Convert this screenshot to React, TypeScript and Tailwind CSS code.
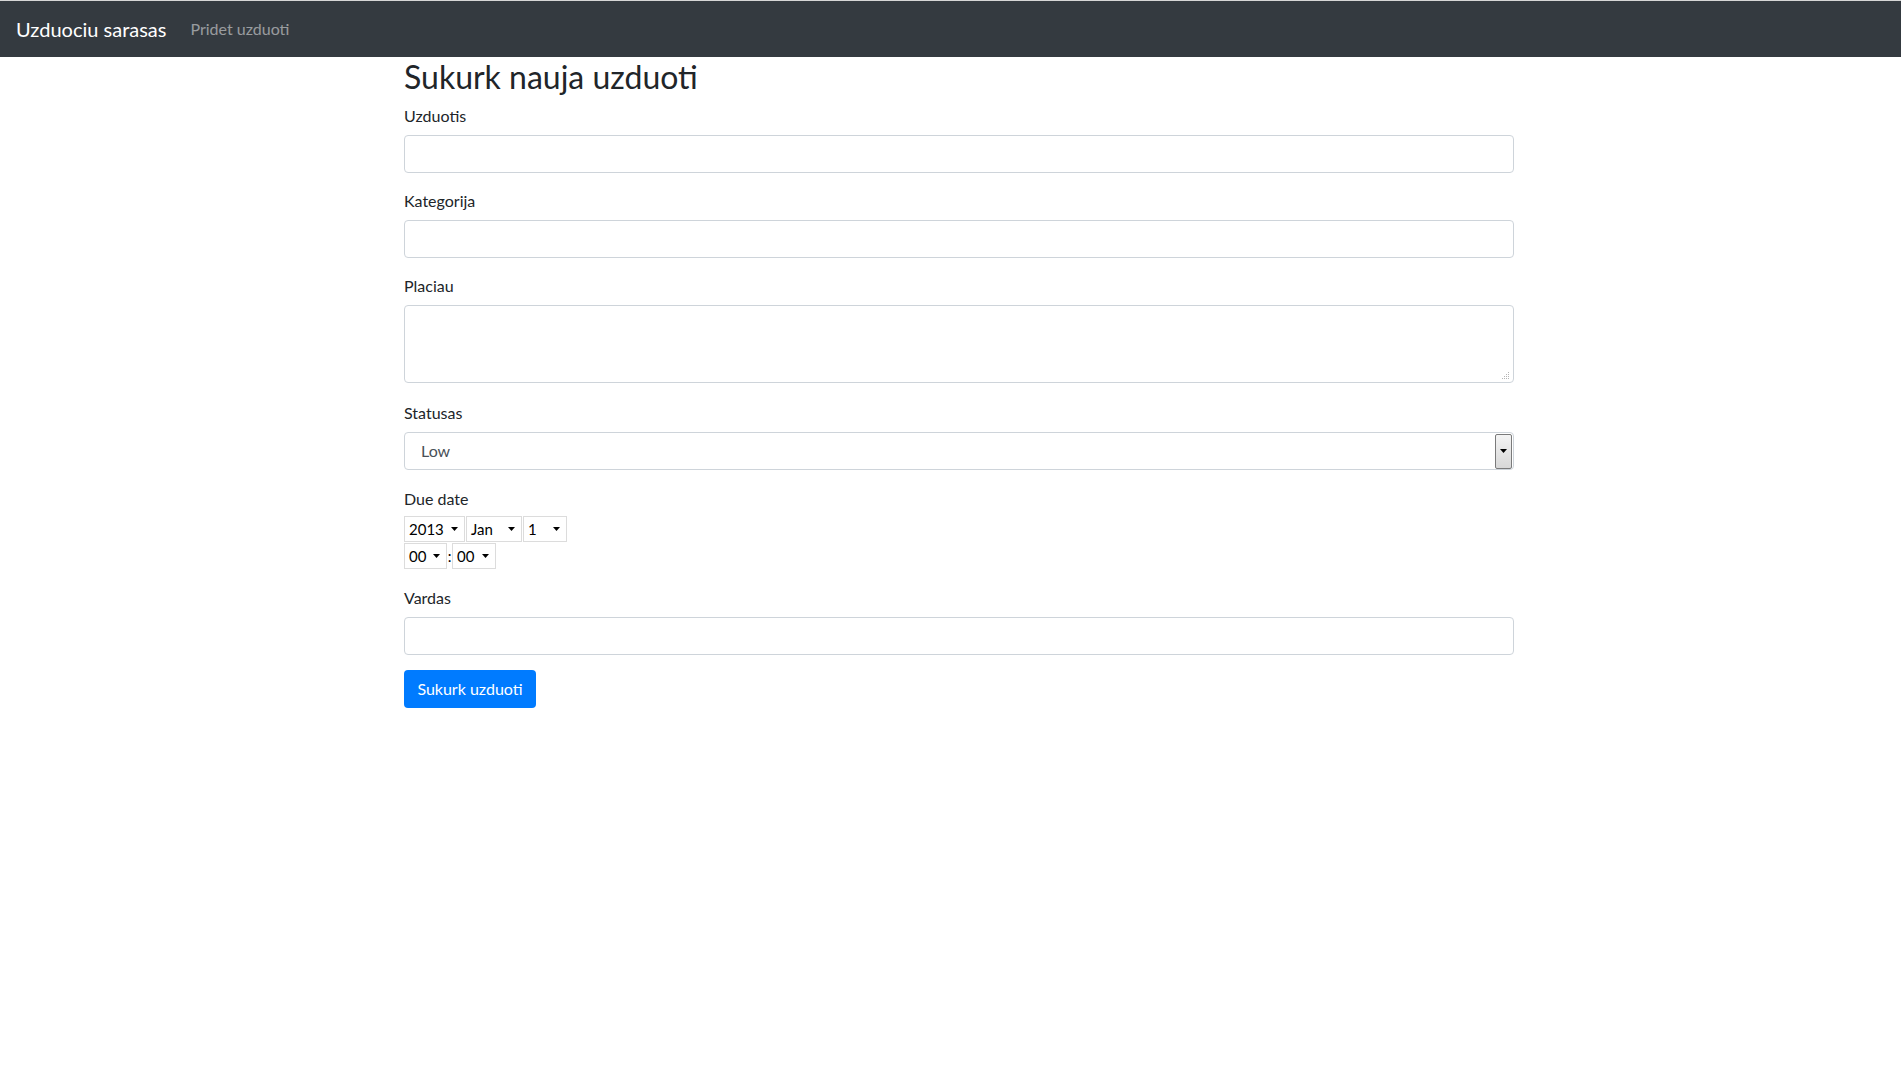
import React from 'react';

const FONT = 'Lato, "Open Sans", "Liberation Sans", sans-serif';

function Field({ label, children, mb = 'mb-4' }: { label: string; children: React.ReactNode; mb?: string }) {
    return (
        <div className={`flex flex-col ${mb}`}>
            <label className="mb-[7px] pt-px text-base leading-6 text-[#212529]">{label}</label>
            {children}
        </div>
    );
}

function TextInput() {
    return <div className="h-[38px] w-full rounded border border-[#ced4da] bg-white" />;
}

function MiniSelect({ value, width }: { value: string; width: string }) {
    return (
        <div className={`flex h-[26px] items-center justify-between border border-[#dcdcdc] bg-white pl-[4px] pr-[6px] text-[15px] text-black ${width}`}>
            <span>{value}</span>
            <svg width="7" height="4" viewBox="0 0 7 4">
                <path d="M0 0h7L3.5 4z" fill="#000" />
            </svg>
        </div>
    );
}

export default function App() {
    return (
        <div className="min-h-screen bg-white" style={{ fontFamily: FONT }}>
            {/* Navbar */}
            <div className="h-px bg-[#d6d6d6]" />
            <nav className="flex h-[56px] items-center bg-[#343a40] px-4">
                <span className="mr-4 text-xl leading-[30px] text-white">Uzduociu sarasas</span>
                <span className="px-2 text-base text-white/50">Pridet uzduoti</span>
            </nav>

            {/* Form */}
            <div className="ml-[404px] w-[1110px]">
                <h2 className="mb-2 pt-px text-[32px] leading-[37px] text-[#212529]">Sukurk nauja uzduoti</h2>

                <Field label="Uzduotis" mb="mb-[15px]">
                    <TextInput />
                </Field>

                <Field label="Kategorija" mb="mb-[15px]">
                    <TextInput />
                </Field>

                <Field label="Placiau" mb="mb-[17px]">
                    <div className="relative h-[78px] w-full rounded border border-[#ced4da] bg-white">
                        <svg className="absolute bottom-[3px] right-[3px]" width="8" height="8" viewBox="0 0 8 8">
                            <g fill="#b5b5b5">
                                <rect x="6" y="1" width="1" height="1" />
                                <rect x="4" y="3" width="1" height="1" />
                                <rect x="6" y="3" width="1" height="1" />
                                <rect x="2" y="5" width="1" height="1" />
                                <rect x="4" y="5" width="1" height="1" />
                                <rect x="6" y="5" width="1" height="1" />
                                <rect x="0" y="7" width="1" height="1" />
                                <rect x="2" y="7" width="1" height="1" />
                                <rect x="4" y="7" width="1" height="1" />
                                <rect x="6" y="7" width="1" height="1" />
                            </g>
                        </svg>
                    </div>
                </Field>

                <Field label="Statusas">
                    <div className="flex h-[38px] w-full items-center rounded border border-[#ced4da] bg-white pl-[16px] pr-[1px] text-base text-[#495057]">
                        <span className="flex-1">Low</span>
                        <div className="flex h-[35px] w-[17px] items-center justify-center rounded-[2px] border border-[#7a7a7a] bg-gradient-to-b from-[#f4f4f4] to-[#d8d8d8]">
                            <svg width="7" height="4" viewBox="0 0 7 4">
                                <path d="M0 0h7L3.5 4z" fill="#000" />
                            </svg>
                        </div>
                    </div>
                </Field>

                <div className="mb-4 flex flex-col">
                    <label className="mb-[5px] pt-px text-base leading-6 text-[#212529]">Due date</label>
                    <div className="flex gap-px">
                        <MiniSelect value="2013" width="w-[61px]" />
                        <MiniSelect value="Jan" width="w-[56px]" />
                        <MiniSelect value="1" width="w-[44px]" />
                    </div>
                    <div className="mt-px flex items-center">
                        <MiniSelect value="00" width="w-[43px]" />
                        <span className="w-[5px] text-center text-[15px] text-black">:</span>
                        <MiniSelect value="00" width="w-[44px]" />
                    </div>
                </div>

                <Field label="Vardas" mb="mb-[15px]">
                    <TextInput />
                </Field>

                <button className="h-[38px] w-[132px] rounded bg-[#007bff] text-base text-white">Sukurk uzduoti</button>
            </div>
        </div>
    );
}
